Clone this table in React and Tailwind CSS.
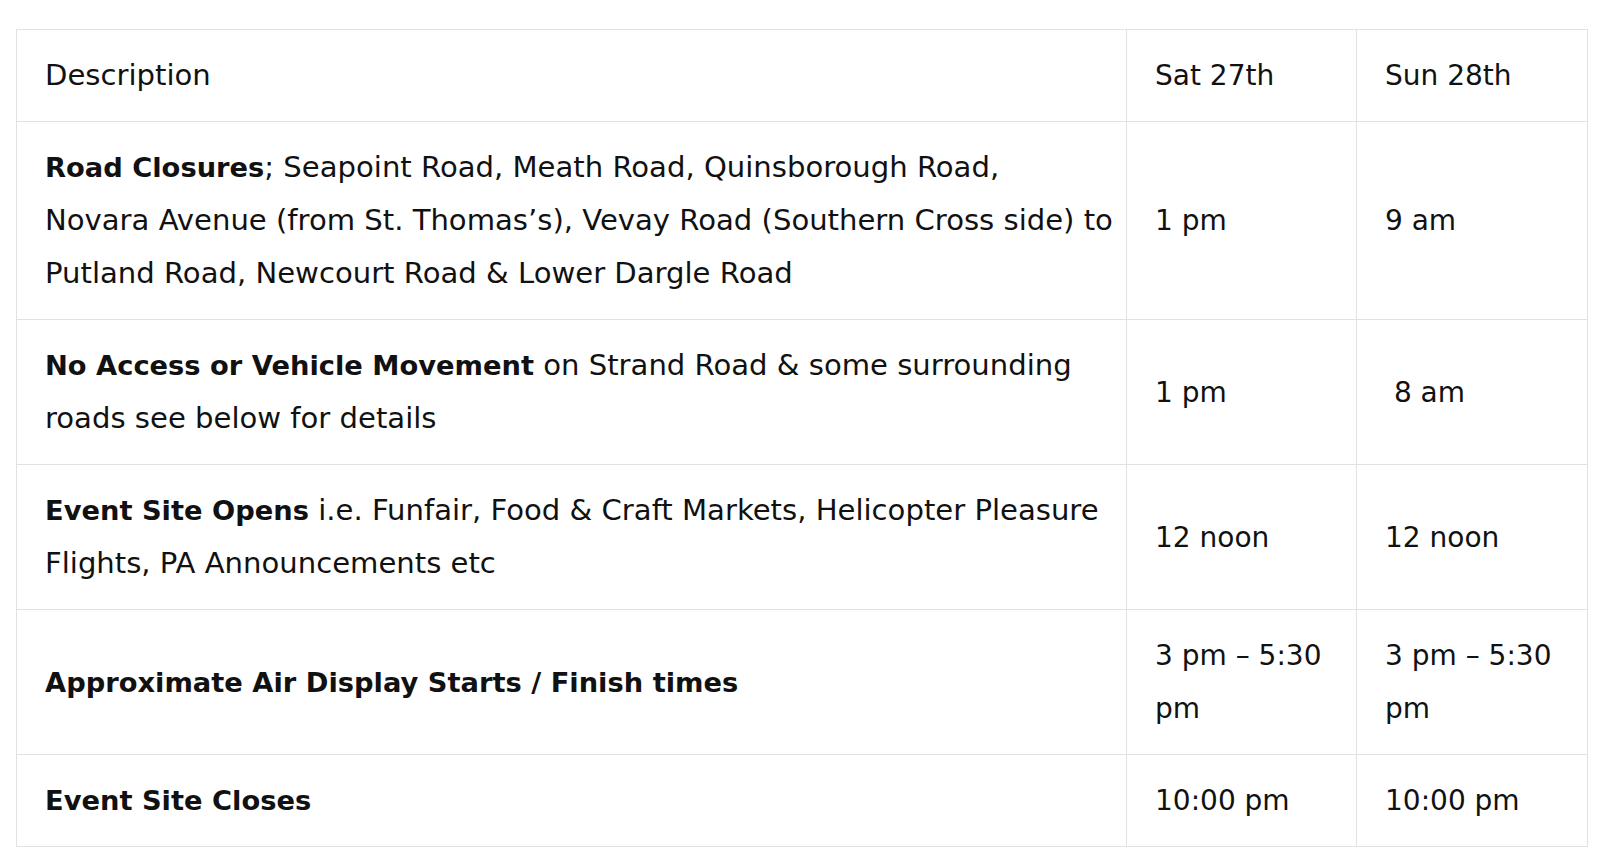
export default function App() {
  const rows = [
    {
      desc: (
        <>
          <strong className="font-bold text-[27.3px]">Road Closures</strong>; Seapoint Road, Meath Road, Quinsborough Road,
          <br />
          Novara Avenue (from St. Thomas’s), Vevay Road (Southern Cross side) to Putland Road, Newcourt Road &amp; Lower Dargle Road
        </>
      ),
      sat: "1 pm",
      sun: "9 am",
    },
    {
      desc: (
        <>
          <strong className="font-bold text-[27.3px]">No Access or Vehicle Movement</strong> on Strand Road &amp; some surrounding roads see below for details
        </>
      ),
      sat: "1 pm",
      sun: "\u00a08 am",
    },
    {
      desc: (
        <>
          <strong className="font-bold text-[27.3px]">Event Site Opens</strong> i.e. Funfair, Food &amp; Craft Markets, Helicopter Pleasure Flights, PA Announcements etc
        </>
      ),
      sat: "12 noon",
      sun: "12 noon",
    },
    {
      desc: <strong className="font-bold text-[27.3px]">Approximate Air Display Starts / Finish times</strong>,
      sat: "3 pm – 5:30 pm",
      sun: "3 pm – 5:30 pm",
    },
    {
      desc: <strong className="font-bold text-[27.3px]">Event Site Closes</strong>,
      sat: "10:00 pm",
      sun: "10:00 pm",
    },
  ];

  const cell = "border border-[#e2e2e2] px-[28px] py-[19px] align-middle";
  const descCell = "border border-[#e2e2e2] pl-[28px] pr-[8px] py-[19px] align-middle text-[29.1px]";

  return (
    <div className="min-h-screen bg-white pl-4 pt-[29px] text-[#111] text-[28px] leading-[53px] font-['DejaVu_Sans',sans-serif]">
      <table className="w-[1571px] table-fixed border-collapse">
        <colgroup>
          <col className="w-[1110px]" />
          <col className="w-[230px]" />
          <col className="w-[231px]" />
        </colgroup>
        <tbody>
          <tr>
            <td className={descCell}>Description</td>
            <td className={cell}>Sat 27th</td>
            <td className={cell}>Sun 28th</td>
          </tr>
          {rows.map((r, i) => (
            <tr key={i}>
              <td className={descCell}>{r.desc}</td>
              <td className={cell}>{r.sat}</td>
              <td className={cell}>{r.sun}</td>
            </tr>
          ))}
        </tbody>
      </table>
    </div>
  );
}
